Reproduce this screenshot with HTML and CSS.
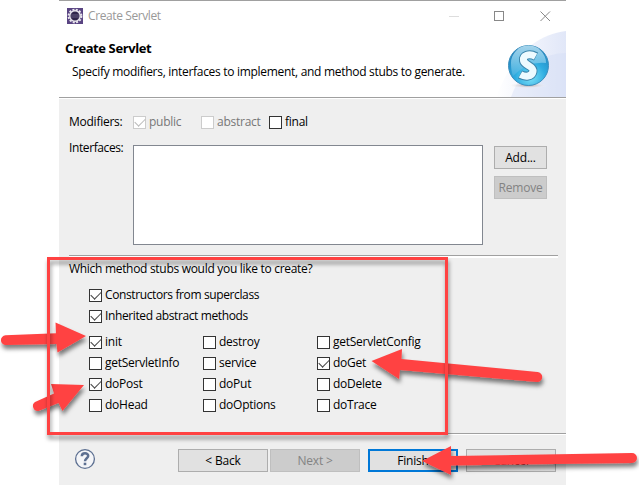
FILE: index.html
```html
<!DOCTYPE html>
<html lang="en">
<head>
<meta charset="utf-8">
<title>Create Servlet</title>
<link rel="stylesheet" href="styles.css">
</head>
<body>
<main class="window">
  <div class="titlebar">
    <svg class="app-icon" width="16" height="16" viewBox="0 0 16 16">
      <rect width="16" height="16" fill="#594482"/>
      <circle cx="8" cy="8" r="6.4" fill="none" stroke="#e9e6ee" stroke-width="2" stroke-dasharray="2 1.35"/>
      <circle cx="8" cy="8" r="5.2" fill="#30264b" stroke="#e9e6ee" stroke-width="1.4"/>
      <path d="M4 7h8M4 9h8" stroke="#655b80"/>
    </svg>
    <span class="caption">Create Servlet</span>
    <svg class="controls" width="102" height="12" viewBox="0 0 102 12" fill="none">
      <path d="M0 6.5h10" stroke="#ddd"/>
      <rect x="45.5" y="1.5" width="9" height="9" stroke="#888"/>
      <path d="M91.5 1.500l9.500 9.500M101 1.500l-9.500 9.500" stroke="#888"/>
    </svg>
  </div>
  <header class="banner">
    <div class="banner-text">
      <h1>Create Servlet</h1>
      <p>Specify modifiers, interfaces to implement, and method stubs to generate.</p>
    </div>
    <svg class="banner-art" width="80" height="66" viewBox="0 0 80 66">
      <defs>
        <linearGradient id="sky" x1="0" y1="0" x2="1" y2="0"><stop offset="0" stop-color="#fff"/><stop offset="1" stop-color="#e1e7f8"/></linearGradient>
        <radialGradient id="ball" cx=".55" cy=".8" r=".75"><stop offset="0" stop-color="#7be0f8"/><stop offset=".5" stop-color="#2eace0"/><stop offset="1" stop-color="#2283bd"/></radialGradient>
        <linearGradient id="gloss" x1="0" y1="0" x2="0" y2="1"><stop offset="0" stop-color="#c5e8f7"/><stop offset="1" stop-color="#47b1e0"/></linearGradient>
        <radialGradient id="shade"><stop offset="0" stop-color="#a99b9b"/><stop offset="1" stop-color="#fff" stop-opacity="0"/></radialGradient>
      </defs>
      <path d="M10 66C25 28 47 4 80 0v66z" fill="url(#sky)"/>
      <path d="M25 66C37 34 55 23 80 22v44z" fill="#d3dcf5" opacity=".4"/>
      <ellipse cx="42" cy="54.500" rx="20" ry="3" fill="url(#shade)"/>
      <circle cx="42.500" cy="34.500" r="20" fill="url(#ball)" stroke="#3d8fbd"/>
      <path d="M25 32a17.500 17.500 0 0 1 35 0Q42 30 27 45Q25 40 25 32z" fill="url(#gloss)" opacity=".8"/>
      <path d="M50 25.500C43 22 36.500 24.500 37.500 29.500C38.500 34.500 48 35 47 40.500C46 46 39 46 34 43.500" fill="none" stroke="#3b85ad" stroke-width="9"/>
      <path d="M49.500 25.500C43 22 36.500 24.500 37.500 29.500C38.500 34.500 48 35 47 40.500C46 46 39 46 34.500 43.500" fill="none" stroke="#edfaff" stroke-width="7"/>
    </svg>
  </header>
  <section class="settings">
    <div class="modifiers">
      <span class="field-name">Modifiers:</span>
      <span class="check disabled checked"><i></i><b>public</b></span>
      <span class="check disabled"><i></i><b>abstract</b></span>
      <span class="check"><i></i><b>final</b></span>
    </div>
    <div class="interfaces">
      <span class="field-name">Interfaces:</span>
      <div class="list"></div>
      <div class="list-actions">
        <div class="button">Add...</div>
        <div class="button off">Remove</div>
      </div>
    </div>
  </section>
  <section class="stubs">
    <p class="question">Which method stubs would you like to create?</p>
    <div class="inherited">
      <span class="check checked"><i></i><b>Constructors from superclass</b></span>
      <span class="check checked"><i></i><b>Inherited abstract methods</b></span>
    </div>
    <div class="methods">
      <span class="check checked"><i></i><b>init</b></span>
      <span class="check"><i></i><b>destroy</b></span>
      <span class="check"><i></i><b>getServletConfig</b></span>
      <span class="check"><i></i><b>getServletInfo</b></span>
      <span class="check"><i></i><b>service</b></span>
      <span class="check checked"><i></i><b>doGet</b></span>
      <span class="check checked"><i></i><b>doPost</b></span>
      <span class="check"><i></i><b>doPut</b></span>
      <span class="check"><i></i><b>doDelete</b></span>
      <span class="check"><i></i><b>doHead</b></span>
      <span class="check"><i></i><b>doOptions</b></span>
      <span class="check"><i></i><b>doTrace</b></span>
    </div>
  </section>
  <footer class="actions">
    <svg class="help" width="22" height="22" viewBox="0 0 22 22" fill="none" stroke="#5c6f91">
      <circle cx="11" cy="11" r="9.400" fill="#f4f5f8" stroke-width="1.300"/>
      <path d="M7.800 8.300C7.800 4.300 14.300 4.500 14.200 8C14.100 10.300 11 10.300 11 13.300" stroke-width="2.500"/>
      <path d="M11 14.700v2.500" stroke-width="2.600"/>
    </svg>
    <div class="button">&lt; Back</div>
    <div class="button off">Next &gt;</div>
    <div class="button primary">Finish</div>
    <div class="button">Cancel</div>
  </footer>
</main>
<svg class="markup" width="639" height="485" viewBox="0 0 639 485">
  <defs>
    <filter id="drop" x="-20%" y="-40%" width="140%" height="200%"><feDropShadow dx="1" dy="4" stdDeviation="2.200" flood-color="#000" flood-opacity=".5"/></filter>
    <filter id="frame-drop" x="-5%" y="-5%" width="112%" height="112%"><feDropShadow dx="1" dy="4" stdDeviation="2" flood-color="#000" flood-opacity=".42"/></filter>
  </defs>
  <g fill="#ff4343">
    <path filter="url(#drop)" d="M86 336L55.500 322.500L56 333.300L5.500 335.300A4.800 4.800 0 0 0 6 345L56.500 344L57.500 352.500z"/>
    <path filter="url(#drop)" d="M84 385L51 384L54 393.500L35 402A5 5 0 0 0 38.500 411L58.500 403L62.500 411z"/>
    <path filter="url(#drop)" d="M371.500 361L402 349L401.500 359L537.500 372A5 5 0 0 1 537 382L400 370L399 379z"/>
    <path filter="url(#drop)" d="M422 461L451 446L451 456L632 453A5 5 0 0 1 632 463L451 465.500L451 475z"/>
  </g>
  <rect filter="url(#frame-drop)" x="48.500" y="258.500" width="398" height="175" fill="none" stroke="#ff4343" stroke-width="3"/>
</svg>
</body>
</html>
```
FILE: styles.css
```css
* { box-sizing: border-box; }
body {
  margin: 0;
  width: 639px;
  height: 485px;
  overflow: hidden;
  background: #fff;
  color: #000;
  font: 12px/16px "Open Sans", "Noto Sans", sans-serif;
  letter-spacing: -0.3px;
}
h1, p { margin: 0; }
.window {
  width: 507px;
  height: 485px;
  margin-left: 59px;
  background: #efefef;
  border-top: 1px solid #a0a0a0;
  display: flex;
  flex-direction: column;
  white-space: nowrap;
}
.titlebar {
  height: 30px;
  display: flex;
  align-items: center;
  padding: 0 15px 0 8px;
  background: #fff;
}
.app-icon { margin-right: 5px; }
.caption { color: #999; letter-spacing: -0.4px; }
.controls { margin-left: auto; }
.banner {
  height: 67px;
  display: flex;
  justify-content: space-between;
  background: #fff;
  border-bottom: 1px solid #a0a0a0;
  box-shadow: 0 1px #fff;
}
.banner-text { padding: 9px 0 0 6px; }
h1 { font-size: 13px; line-height: 16px; font-weight: 700; letter-spacing: -0.4px; }
.banner-text p { padding: 8px 0 0 7px; }
.banner-art { margin-left: -40px; }
.settings { height: 157px; padding: 16px 19px 0 10px; }
.modifiers, .interfaces { display: flex; }
.modifiers { height: 31px; letter-spacing: -0.25px; }
.field-name { width: 64px; flex: none; }
.interfaces .field-name { letter-spacing: -0.4px; }
.check { display: flex; align-items: center; gap: 3px; width: 114px; height: 16px; }
.modifiers .check { width: 68px; }
.check b { font-weight: 400; }
.check i { width: 13px; height: 13px; flex: none; border: 1px solid #333; background: #fff; }
.check.checked i::after {
  content: "";
  display: block;
  width: 9px;
  height: 5px;
  margin: 1px 0 0 1px;
  border: solid #444;
  border-width: 0 0 1.500px 1.500px;
  transform: rotate(-45deg);
}
.disabled { color: #777; }
.disabled i { border-color: #ccc; }
.disabled.checked i::after { border-color: #bbb; }
.interfaces .field-name { margin-top: -5px; }
.list { width: 350px; height: 100px; border: 1px solid #828790; background: #fff; }
.list-actions { display: grid; gap: 7px; margin: 1px 0 0 11px; align-content: start; }
.button {
  width: 90px;
  height: 23px;
  border: 1px solid #adadad;
  background: #e1e1e1;
  text-align: center;
  line-height: 21px;
  letter-spacing: -0.2px;
}
.list-actions .button { width: 53px; }
.button.off { color: #838383; background: #ccc; border-color: #bfbfbf; }
.button.primary { border: 2px solid #0078d7; line-height: 19px; }
.stubs { height: 179px; padding: 6px 0 0 10px; position: relative; border-bottom: 1px solid #a0a0a0; box-shadow: 0 1px #fff; }
.stubs::before { content: ""; position: absolute; left: 10px; top: 0; width: 489px; height: 2px; background: #fff; border-top: 1px solid #a0a0a0; }
.inherited { padding: 10px 0 0 20px; display: grid; gap: 5px; letter-spacing: -0.38px; }
.methods { padding: 10px 0 0 20px; display: grid; grid-template-columns: repeat(3, 114px); row-gap: 5px; letter-spacing: -0.25px; }
.actions { display: flex; padding: 15px 10px 0 15px; }
.actions .button + .button { margin-left: 2px; }
.actions .button.primary, .actions .primary + .button { margin-left: 8px; }
.help { margin: -1px 82px 0 0; }
.markup { position: absolute; left: 0; top: 0; pointer-events: none; }
```
